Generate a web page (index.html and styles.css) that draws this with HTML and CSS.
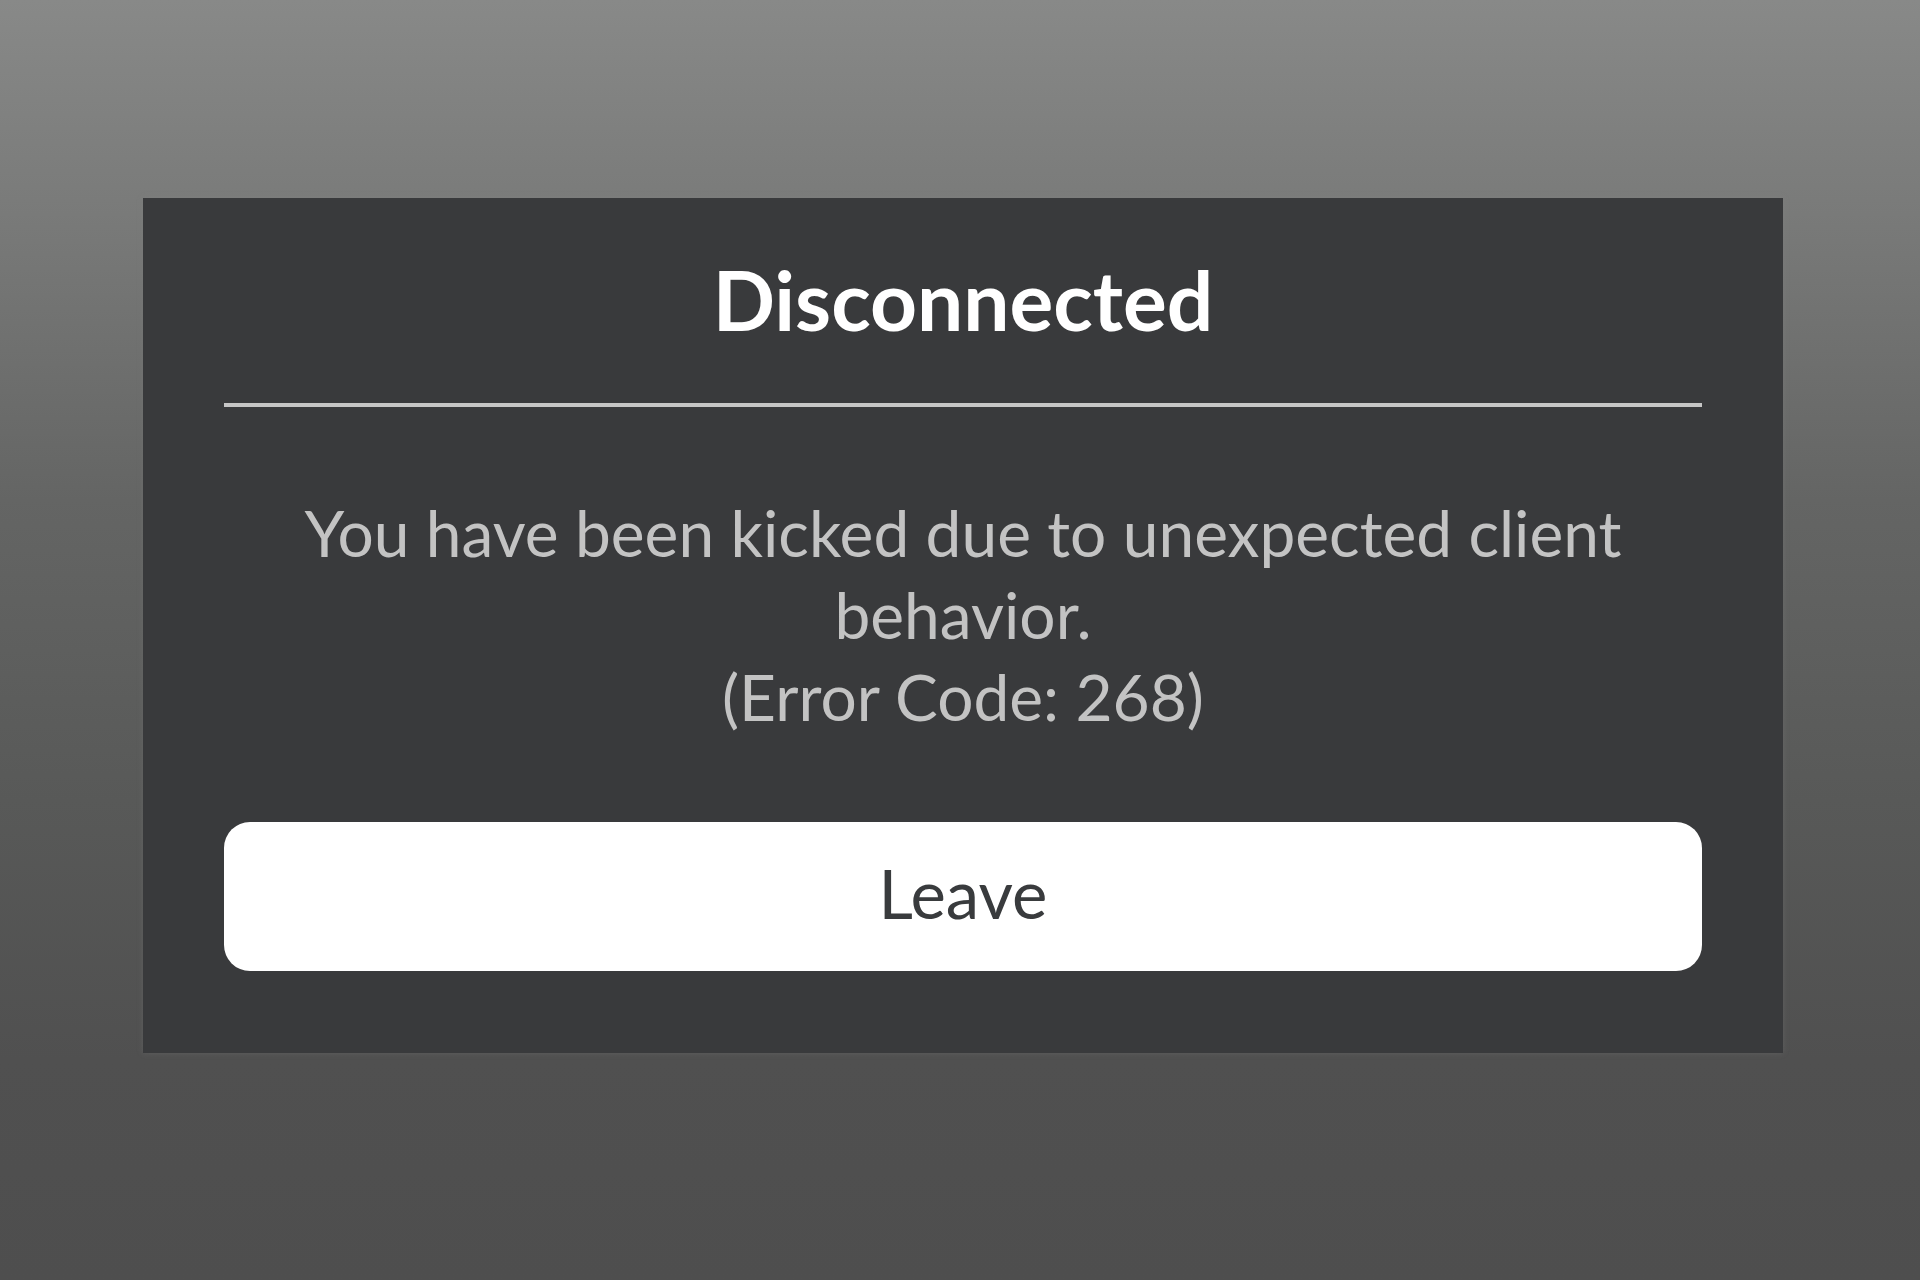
FILE: index.html
```html
<!DOCTYPE html>
<html lang="en">
<head>
<meta charset="utf-8">
<title>Disconnected</title>
<link rel="stylesheet" href="styles.css">
</head>
<body>
<main class="screen">
  <section class="dialog">
    <h1 class="title">Disconnected</h1>
    <div class="divider"></div>
    <p class="message">You have been kicked due to unexpected client<br>behavior.<br>(Error Code: 268)</p>
    <button class="leave" type="button">Leave</button>
  </section>
</main>
</body>
</html>
```

FILE: styles.css
```css
html, body {
  margin: 0;
  padding: 0;
  height: 100%;
}

body {
  font-family: Lato, "Open Sans", "Liberation Sans", sans-serif;
  background: linear-gradient(to bottom, #888988 0px, #7a7b7a 200px, #646564 500px, #585958 800px, #505050 1060px, #4e4e4e 1280px);
  width: 1920px;
  height: 1280px;
  overflow: hidden;
}

.screen {
  display: flex;
  justify-content: flex-start;
  padding: 198px 0 0 143px;
  box-sizing: border-box;
  height: 100%;
}

.dialog {
  width: 1640px;
  height: 855px;
  box-sizing: border-box;
  background: #393a3c;
  padding: 52px 81px 0 81px;
  display: flex;
  flex-direction: column;
  box-shadow: 0 0 6px rgba(140, 140, 140, 0.25);
}

.title {
  margin: 0;
  font-family: Lato, "Open Sans", sans-serif;
  font-weight: 700;
  font-size: 82px;
  line-height: 1.2;
  color: #ffffff;
  text-align: center;
}

.divider {
  height: 4px;
  margin-top: 55px;
  background: #c6c6c6;
}

.message {
  margin: 85px 0 0 0;
  font-size: 64px;
  line-height: 82px;
  color: #c3c3c3;
  text-align: center;
}

.leave {
  margin-top: 84px;
  height: 149px;
  border: none;
  border-radius: 26px;
  background: #ffffff;
  color: #393b3d;
  font-family: Lato, "Open Sans", sans-serif;
  font-size: 67px;
  display: flex;
  align-items: center;
  justify-content: center;
  padding: 0 0 8px 0;
}
```
